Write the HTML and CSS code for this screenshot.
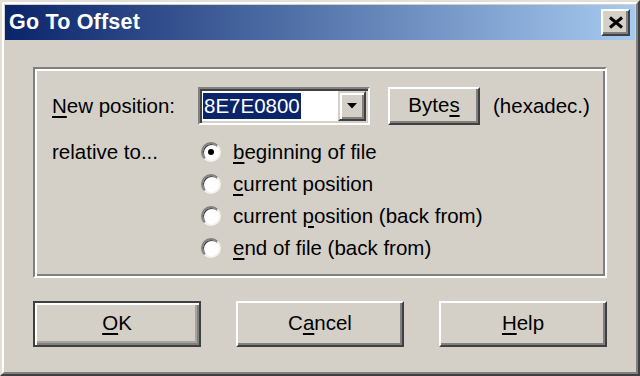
FILE: index.html
```html
<!DOCTYPE html>
<html>
<head>
<meta charset="utf-8">
<title>Go To Offset</title>
<link rel="stylesheet" href="styles.css">
</head>
<body>
<div class="window">
  <div class="frame">
    <div class="titlebar">
      <span class="title">Go To Offset</span>
      <div class="close">
        <svg width="16" height="13" viewBox="0 0 16 13"><path d="M2 1.5 L14 11.5 M14 1.5 L2 11.5" stroke="#000" stroke-width="3" fill="none"/></svg>
      </div>
    </div>
    <div class="client">
      <div class="group">
        <div class="row-pos">
          <span class="lbl"><u>N</u>ew position:</span>
          <div class="combo">
            <div class="combo-field"><span class="sel">8E7E0800</span></div>
            <div class="combo-btn">
              <svg width="10" height="6" viewBox="0 0 10 6"><polygon points="0,0 10,0 5,5.5" fill="#000"/></svg>
            </div>
          </div>
          <div class="btn bytes">Byte<u>s</u></div>
          <span class="hex">(hexadec.)</span>
        </div>
        <div class="row-rel">
          <span class="lbl rel">relative to...</span>
          <div class="radios">
            <div class="radio-row"><span class="radio checked"></span><span><u>b</u>eginning of file</span></div>
            <div class="radio-row"><span class="radio"></span><span><u>c</u>urrent position</span></div>
            <div class="radio-row"><span class="radio"></span><span>current <u>p</u>osition (back from)</span></div>
            <div class="radio-row"><span class="radio"></span><span><u>e</u>nd of file (back from)</span></div>
          </div>
        </div>
      </div>
      <div class="buttons">
        <div class="btn big default"><u>O</u>K</div>
        <div class="btn big">C<u>a</u>ncel</div>
        <div class="btn big"><u>H</u>elp</div>
      </div>
    </div>
  </div>
</div>
</body>
</html>
```
FILE: styles.css
```css
html, body {
  margin: 0;
  padding: 0;
  background: #d4d0c8;
}
body {
  font-family: "Liberation Sans", Arial, sans-serif;
  font-size: 20.5px;
  color: #000;
}
u {
  text-decoration: underline;
  text-decoration-thickness: 2px;
  text-underline-offset: 3px;
}
.window {
  width: 640px;
  height: 376px;
  box-sizing: border-box;
  border: 2px solid;
  border-color: #e2dfd8 #404040 #404040 #e2dfd8;
  background: #d4d0c8;
}
.frame {
  height: 100%;
  box-sizing: border-box;
  border: 2px solid;
  border-color: #fff #808080 #808080 #fff;
  padding: 1px;
  display: flex;
  flex-direction: column;
}
.titlebar {
  height: 35px;
  flex: none;
  display: flex;
  align-items: center;
  padding: 0 5px 0 4px;
  background: linear-gradient(to right, #0a246a, #a6caf0);
}
.title {
  color: #fff;
  font-weight: bold;
  font-size: 21.5px;
  letter-spacing: 0.2px;
}
.close {
  margin-left: auto;
  width: 29px;
  height: 27px;
  box-sizing: border-box;
  background: #d4d0c8;
  border: 2px solid;
  border-color: #fff #404040 #404040 #fff;
  box-shadow: inset -2px -2px 0 #808080;
  display: flex;
  align-items: center;
  justify-content: center;
}
.close svg { display: block; margin: 0 0 1px 1px; }
.client {
  flex: 1;
  padding: 27px 28px 0 28px;
}
.group {
  height: 211px;
  box-sizing: border-box;
  border: 2px solid;
  border-color: #808080 #fff #fff #808080;
  box-shadow: inset 2px 2px 0 #fff, inset -2px -2px 0 #808080;
  padding: 18px 0 0 17px;
}
.row-pos {
  display: flex;
  align-items: center;
  height: 38px;
}
.lbl {
  width: 146px;
  flex: none;
}
.combo {
  width: 172px;
  height: 38px;
  box-sizing: border-box;
  border: 2px solid;
  border-color: #808080 #fff #fff #808080;
  box-shadow: inset 2px 2px 0 #404040, inset -2px -2px 0 #d4d0c8;
  padding: 2px;
  display: flex;
  background: #fff;
  margin-right: 18px;
}
.combo-field {
  flex: 1;
  padding: 2px 0 0 1px;
}
.sel {
  display: inline-block;
  height: 26px;
  line-height: 26px;
  padding: 0 1px;
  background: #0a246a;
  color: #fff;
}
.combo-btn {
  width: 28px;
  box-sizing: border-box;
  background: #d4d0c8;
  border: 2px solid;
  border-color: #d4d0c8 #404040 #404040 #d4d0c8;
  box-shadow: inset 2px 2px 0 #fff, inset -2px -2px 0 #808080;
  display: flex;
  align-items: center;
  justify-content: center;
}
.combo-btn svg { display: block; }
.btn {
  box-sizing: border-box;
  background: #d4d0c8;
  border: 2px solid;
  border-color: #fff #404040 #404040 #fff;
  box-shadow: inset -2px -2px 0 #808080;
  display: flex;
  align-items: center;
  justify-content: center;
  padding-bottom: 2px;
}
.bytes {
  width: 92px;
  height: 38px;
  margin-right: 13px;
}
.row-rel {
  display: flex;
  margin-top: 11px;
}
.rel {
  line-height: 32px;
}
.radios {
  display: flex;
  flex-direction: column;
  padding-left: 3px;
}
.radio-row {
  height: 32px;
  display: flex;
  align-items: center;
  gap: 12px;
  white-space: nowrap;
}
.radio {
  width: 20px;
  height: 20px;
  box-sizing: border-box;
  border-radius: 50%;
  background: #fff;
  border: 2px solid;
  border-color: #808080 #f4f3f0 #f4f3f0 #808080;
  box-shadow: inset 1px 1px 0 #404040;
  display: flex;
  align-items: center;
  justify-content: center;
  flex: none;
}
.radio.checked::after {
  content: "";
  width: 6px;
  height: 6px;
  border-radius: 50%;
  background: #000;
}
.buttons {
  display: flex;
  gap: 35px;
  margin-top: 23px;
}
.big {
  width: 169px;
  height: 46px;
}
.default {
  border: 2px solid #404040;
  box-shadow: inset 2px 2px 0 #fff, inset -2px -2px 0 #808080, inset -4px -4px 0 #a8a49c;
}
```
